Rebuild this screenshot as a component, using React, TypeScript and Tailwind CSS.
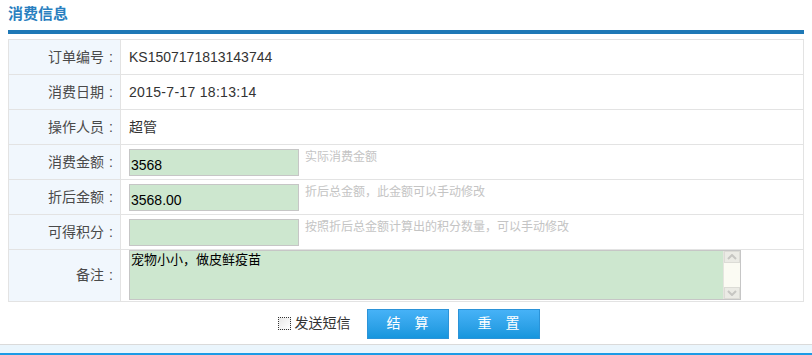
import React from 'react'

const font = "font-['Arial','Noto_Sans_CJK_SC',sans-serif]"

function Row({ label, children, tall }: { label: string; children: React.ReactNode; tall?: boolean }) {
  return (
    <div className={`flex border-b border-[#e3e3e3] last:border-b-0 ${tall ? 'h-[51px]' : 'h-[35px]'}`}>
      <div className="w-[112px] shrink-0 bg-[#f1f7fd] border-r border-[#e3e3e3] flex items-center justify-end pr-[2px] text-[14px] text-[#4a4a4a]">
        {label}
        <span className="w-[14px] text-center">:</span>
      </div>
      <div className="flex-1 min-w-0">{children}</div>
    </div>
  )
}

function Field({ value, hint }: { value: string; hint: string }) {
  return (
    <div className="flex items-start pl-[8px] pt-[4px]">
      <div className="w-[170px] h-[27px] bg-[#cde7cf] border border-[#c6c6c6] flex items-end pl-[1px] pb-[3px] text-[14px] text-black leading-none">
        {value}
      </div>
      <span className="ml-[6px] text-[12px] text-[#c4c4c4] leading-[14px] mt-[1px]">{hint}</span>
    </div>
  )
}

function Chevron({ up }: { up?: boolean }) {
  return (
    <svg width="10" height="6" viewBox="0 0 10 6">
      <path d={up ? 'M1 5 L5 1 L9 5' : 'M1 1 L5 5 L9 1'} stroke="#c6c6c2" strokeWidth="2" fill="none" />
    </svg>
  )
}

export default function App() {
  return (
    <div className={`${font} w-[812px] h-[355px] bg-white flex flex-col`}>
      <div className="px-[8px]">
        <div className="h-[30px] flex items-center text-[15px] font-bold text-[#2a7fc0] pb-[1px]">消费信息</div>
        <div className="h-[4px] bg-[#1e78b6]" />
        <div className="mt-[5px] border border-[#e3e3e3]">
          <Row label="订单编号">
            <div className="h-full flex items-center pl-[8px] text-[14px] text-[#333]">KS1507171813143744</div>
          </Row>
          <Row label="消费日期">
            <div className="h-full flex items-center pl-[8px] text-[14px] text-[#333] tracking-[0.3px]">2015-7-17 18:13:14</div>
          </Row>
          <Row label="操作人员">
            <div className="h-full flex items-center pl-[8px] text-[14px] text-[#333]">超管</div>
          </Row>
          <Row label="消费金额">
            <Field value="3568" hint="实际消费金额" />
          </Row>
          <Row label="折后金额">
            <Field value="3568.00" hint="折后总金额，此金额可以手动修改" />
          </Row>
          <Row label="可得积分">
            <Field value="" hint="按照折后总金额计算出的积分数量，可以手动修改" />
          </Row>
          <Row label="备注" tall>
            <div className="pl-[8px] h-full">
              <div className="w-[612px] h-[50px] bg-[#cde7cf] border border-[#c6c6c6] flex">
                <div className="flex-1 pl-[1px] text-[13px] leading-[16px] text-black font-['Noto_Sans_CJK_SC',sans-serif]">
                  宠物小小，做皮鲜疫苗
                </div>
                <div className="w-[17px] bg-[#fbfbf3] border-l border-[#e5e5df] flex flex-col justify-between">
                  <div className="h-[12px] bg-[#ebebe5] border border-[#dcdcd6] flex items-center justify-center">
                    <Chevron up />
                  </div>
                  <div className="h-[12px] bg-[#ebebe5] border border-[#dcdcd6] flex items-center justify-center">
                    <Chevron />
                  </div>
                </div>
              </div>
            </div>
          </Row>
        </div>
        <div className="h-[42px] flex items-center justify-center pt-[1px] pl-[5px]">
          <div className="w-[13px] h-[13px] border border-dotted border-[#333] bg-gradient-to-br from-[#e8e8e8] to-white mr-[4px]" />
          <span className="text-[14px] text-[#333]">发送短信</span>
          <button className="ml-[16px] w-[82px] h-[30px] border border-[#2b93d8] bg-gradient-to-b from-[#46b2f7] to-[#1596dd] text-white text-[14px] tracking-[14px] pl-[14px]">
            结算
          </button>
          <button className="ml-[9px] w-[82px] h-[30px] border border-[#2b93d8] bg-gradient-to-b from-[#46b2f7] to-[#1596dd] text-white text-[14px] tracking-[14px] pl-[14px]">
            重置
          </button>
        </div>
      </div>
      <div className="border-t border-[#dadada] h-[10px] bg-[#eaf5fc]" />
      <div className="h-[3px] bg-[#1c9be6]" />
    </div>
  )
}
